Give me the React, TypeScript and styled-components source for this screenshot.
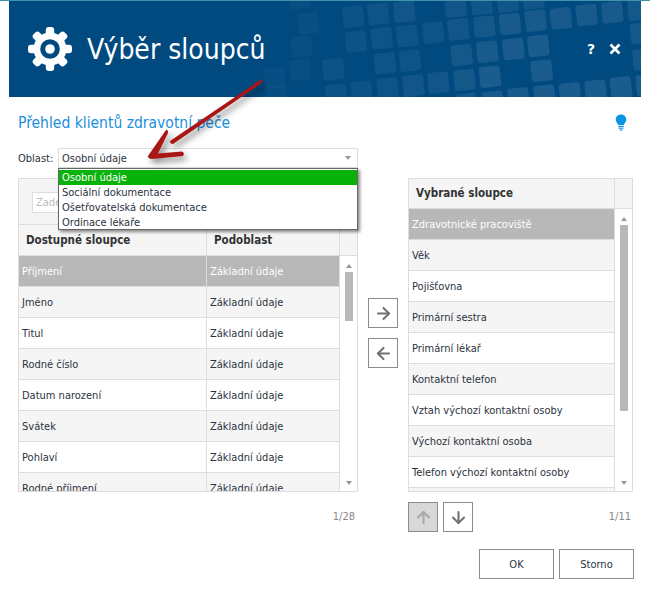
import React from "react";
import styled, { createGlobalStyle } from "styled-components";
import { ArrowRight, ArrowLeft, ArrowUp, ArrowDown } from "lucide-react";

const Global = createGlobalStyle`
  html, body { margin: 0; padding: 0; background: #fff; overflow: hidden; }
  * { box-sizing: border-box; }
`;
const Page = styled.div`
  width: 650px; height: 593px; position: relative; overflow: hidden;
  border-top: 1px solid #3f93ad;
  font-family: "DejaVu Sans Condensed", "DejaVu Sans", sans-serif;
  font-size: 11px; color: #2b3340;
`;
const Header = styled.header`
  position: relative; margin-left: 9px; width: 632px; height: 96px;
  background: #004a80; display: flex; align-items: center; padding: 0 20px 0 18px; overflow: hidden; color: #fff;
`;
const Pattern = styled.svg`position: absolute; left: 0; top: 0;`;
const Title = styled.h1`
  position: relative; margin: 0 0 0 14px; font-size: 28px; font-weight: 400; flex: 1; letter-spacing: 0;
`;
const HeaderAction = styled.span`
  position: relative; font-size: 14px; font-weight: 700; margin-left: 14px; display: flex; align-items: center; font-family: "DejaVu Sans", sans-serif;
`;
const Content = styled.main`padding: 0 16px 0 18px;`;
const SubRow = styled.div`display: flex; justify-content: space-between; align-items: center; height: 51px; padding-right: 7px;`;
const Sub = styled.h2`margin: 0; font-size: 15.5px; font-weight: 400; color: #1b8fdc;`;
const AreaRow = styled.div`display: flex; align-items: center; height: 20px; font-size: 11px;`;
const AreaLabel = styled.label`width: 40px;`;
const SelectBox = styled.div`
  position: relative; width: 300px; height: 20px; border: 1px solid #ddd; background: #fff; padding-left: 3px;
  display: flex; align-items: center; justify-content: space-between; padding-right: 3px;
`;
const Caret = styled.span<{ $up?: boolean }>`
  width: 0; height: 0; border-left: 3.5px solid transparent; border-right: 3.5px solid transparent;
  border-top: ${(p) => (p.$up ? "0" : "4px solid #999")};
  border-bottom: ${(p) => (p.$up ? "4px solid #999" : "0")};
  margin: 0 3px;
`;
const Menu = styled.ul`
  position: absolute; left: -1px; top: 19px; width: 300px; height: 62px; margin: 0; padding: 1px 0 0 0; list-style: none; z-index: 3;
  background: #fff; border: 1px solid #666; box-shadow: 2px 2px 3px rgba(0,0,0,.45);
`;
const MenuItem = styled.li<{ $active?: boolean }>`
  height: 15px; line-height: 15px; padding-left: 3px;
  background: ${(p) => (p.$active ? "#08b208" : "transparent")};
  color: ${(p) => (p.$active ? "#fff" : "inherit")};
`;
const Lists = styled.div`display: flex; margin-top: 10px; align-items: flex-start;`;
const Panel = styled.section<{ $w: number }>`
  width: ${(p) => p.$w}px; height: 314px; border: 1px solid #ddd; background: #f5f5f5; display: flex; flex-direction: column; overflow: hidden;
`;
const Toolbar = styled.div`height: 46px; padding: 13px 0 0 13px; border-bottom: 1px solid #ddd;`;
const Filter = styled.input`
  width: 160px; height: 21px; border: 1px solid #ddd; background: #fff; padding: 0 3px; font: inherit; display: block;
  &::placeholder { color: #bbb; }
`;
const Grid = styled.div`flex: 1; display: flex; min-height: 0;`;
const Table = styled.div`flex: 1; display: flex; flex-direction: column; min-width: 0; overflow: hidden;`;
const HeadRow = styled.div<{ $h: number }>`display: flex; height: ${(p) => p.$h}px; border-bottom: 1px solid #ddd; flex: none;`;
const HeadCell = styled.div<{ $w?: number }>`
  ${(p) => (p.$w ? `width:${p.$w}px; flex:none; border-right:1px solid #ddd;` : "flex:1;")}
  padding: 0 0 1px 7px; font-weight: 700; display: flex; align-items: center; font-size: 11.5px; color: #333;
`;
const Row = styled.div<{ $sel?: boolean; $alt?: boolean }>`
  display: flex; height: 31px; flex: none; border-bottom: 1px solid #ddd;
  background: ${(p) => (p.$sel ? "#b8b8b8" : p.$alt ? "#f5f5f5" : "#fff")};
  color: ${(p) => (p.$sel ? "#fff" : "inherit")};
`;
const Cell = styled.div<{ $w?: number }>`
  ${(p) => (p.$w ? `width:${p.$w}px; flex:none; border-right:1px solid #ddd;` : "flex:1;")}
  padding-left: 3px; display: flex; align-items: center; white-space: nowrap;
`;
const ScrollHead = styled.div`width: 18px; border-left: 1px solid #ddd; flex: none;`;
const ScrollCol = styled.div`width: 18px; flex: none; display: flex; flex-direction: column;`;
const Track = styled.div`
  flex: 1; background: #fff; border-left: 1px solid #ddd; display: flex; flex-direction: column; align-items: center; padding: 8px 0 6px;
`;
const Thumb = styled.div<{ $h: number }>`width: 8px; height: ${(p) => p.$h}px; background: #b8b8b8; margin-top: 4px; margin-bottom: auto;`;
const Middle = styled.div`width: 30px; margin: 120px 10px 0; display: flex; flex-direction: column; gap: 10px;`;
const IconBtn = styled.button<{ $off?: boolean }>`
  width: 30px; height: 30px; padding: 0; border: 1px solid #8c8c8c; display: flex; align-items: center; justify-content: center;
  background: ${(p) => (p.$off ? "#d8d8d8" : "#fff")}; color: ${(p) => (p.$off ? "#a8a8a8" : "#707070")};
`;
const Under = styled.div`display: flex; height: 40px; margin-top: 10px; align-items: flex-start;`;
const LeftCount = styled.div`width: 340px; text-align: right; padding: 8px 3px 0 0; color: #888; height: 30px;`;
const RightUnder = styled.div`margin-left: 50px; width: 225px; display: flex; gap: 5px;`;
const Count = styled.span`margin-left: auto; padding: 8px 2px 0 0; color: #888;`;
const Footer = styled.div`display: flex; justify-content: flex-end; gap: 5px; margin-top: 7px;`;
const Btn = styled.button`
  width: 75px; height: 30px; background: #fff; border: 1px solid #8c8c8c; font: inherit; color: inherit; padding: 0;
`;
const Overlay = styled.svg`position: absolute; left: 0; top: -1px; z-index: 5; pointer-events: none;`;

const squares: [number, number, number][] = [
  [85,50,.05],[160,42,.06],[238,35,.07],[392,20,.07],[470,12,.07],[548,5,.07],[625,-5,.07],
  [708,55,.09],[785,45,.09],[862,37,.09],[632,62,.09],[555,72,.09],[478,80,.08],[400,88,.07],[325,98,.06],[247,108,.06],[170,115,.06],[93,125,.05],
  [640,138,.1],[565,147,.1],[487,155,.09],[410,165,.08],[255,182,.06],[180,190,.06],[25,208,.05],
  [650,212,.1],[495,230,.1],[418,240,.08],[340,248,.07],[265,257,.07],[188,265,.06],[110,275,.05],[33,285,.05],
  [948,100,.08],[955,178,.08],[735,280,.1],[812,272,.1],[888,262,.1],[965,255,.1],[658,287,.1],[580,295,.09],[503,305,.09],[425,312,.08],[940,30,.08],
  [-75,-5,.03],[-50,70,.03],[-70,140,.03],[-75,210,.03],[-150,235,.025],[-145,290,.025],
];

const Gear = () => (
  <svg width="46" height="46" viewBox="-23 -23 46 46" style={{ position: "relative", flex: "none" }}>
    {[0, 45, 90, 135].map((a) => (
      <rect key={a} x="-4.2" y="-22" width="8.4" height="44" rx="3" fill="#fff" transform={`rotate(${a})`} />
    ))}
    <circle r="16.5" fill="#fff" />
    <circle r="9.8" fill="#004a80" />
    <circle r="4.8" fill="#fff" />
  </svg>
);

const Bulb = () => (
  <svg width="12" height="17" viewBox="0 0 12 17">
    <path d="M6 0.5C2.9 0.5 .7 2.7 .7 5.4c0 2.7 2 3.6 2.6 5.6h5.4c.6-2 2.6-2.9 2.6-5.6C11.3 2.7 9.1.5 6 .5z" fill="#0a95e2" />
    <rect x="3.2" y="11.8" width="5.6" height="1.1" fill="#0a95e2" />
    <rect x="3.5" y="13.6" width="5" height="1.1" fill="#0a95e2" />
    <rect x="4.5" y="15.4" width="3" height="1.1" fill="#0a95e2" />
  </svg>
);

const Cross = () => (
  <svg width="12" height="12" viewBox="0 0 12 12">
    <path d="M1.5 1.5L10.5 10.5M10.5 1.5L1.5 10.5" stroke="#fff" strokeWidth="2.6" />
  </svg>
);

const Scroll = ({ h }: { h: number }) => (
  <ScrollCol>
    <Track>
      <Caret $up />
      <Thumb $h={h} />
      <Caret />
    </Track>
  </ScrollCol>
);

const left = ["Příjmení", "Jméno", "Titul", "Rodné číslo", "Datum narození", "Svátek", "Pohlaví", "Rodné příjmení"];
const right = [
  "Zdravotnické pracoviště", "Věk", "Pojišťovna", "Primární sestra", "Primární lékař", "Kontaktní telefon",
  "Vztah výchozí kontaktní osoby", "Výchozí kontaktní osoba", "Telefon výchozí kontaktní osoby", "",
];
const areas = ["Osobní údaje", "Sociální dokumentace", "Ošetřovatelská dokumentace", "Ordinace lékaře"];

export default function App() {
  return (
    <Page>
      <Global />
      <Header>
        <Pattern width="632" height="96" viewBox="0 0 632 96">
          {squares.map(([x, y, o], i) => (
            <rect
              key={i}
              x={x / 3 + 316 - 10.5}
              y={y / 3 - 1 - 10.5}
              width="21"
              height="21"
              rx="3"
              fill="#fff"
              opacity={o}
              transform={`rotate(-6 ${x / 3 + 316} ${y / 3 - 1})`}
            />
          ))}
        </Pattern>
        <Gear />
        <Title>Výběr sloupců</Title>
        <HeaderAction>?</HeaderAction>
        <HeaderAction><Cross /></HeaderAction>
      </Header>
      <Content>
        <SubRow>
          <Sub>Přehled klientů zdravotní péče</Sub>
          <Bulb />
        </SubRow>
        <AreaRow>
          <AreaLabel>Oblast:</AreaLabel>
          <SelectBox>
            Osobní údaje
            <Caret />
            <Menu>
              {areas.map((a, i) => (
                <MenuItem key={a} $active={i === 0}>{a}</MenuItem>
              ))}
            </Menu>
          </SelectBox>
        </AreaRow>
        <Lists>
          <Panel $w={340}>
            <Toolbar><Filter placeholder="Zadejte text" /></Toolbar>
            <Grid>
              <Table>
                <HeadRow $h={31}>
                  <HeadCell $w={188}>Dostupné sloupce</HeadCell>
                  <HeadCell>Podoblast</HeadCell>
                  <ScrollHead />
                </HeadRow>
                <Grid>
                  <Table>
                    {left.map((t, i) => (
                      <Row key={t} $sel={i === 0} $alt={i % 2 === 1}>
                        <Cell $w={188}>{t}</Cell>
                        <Cell>Základní údaje</Cell>
                      </Row>
                    ))}
                  </Table>
                  <Scroll h={49} />
                </Grid>
              </Table>
            </Grid>
          </Panel>
          <Middle>
            <IconBtn aria-label="Přidat"><ArrowRight size={19} strokeWidth={2.6} /></IconBtn>
            <IconBtn aria-label="Odebrat"><ArrowLeft size={19} strokeWidth={2.6} /></IconBtn>
          </Middle>
          <Panel $w={225}>
            <Table>
              <HeadRow $h={30}>
                <HeadCell>Vybrané sloupce</HeadCell>
                <ScrollHead />
              </HeadRow>
              <Grid>
                <Table>
                  {right.map((t, i) => (
                    <Row key={i} $sel={i === 0} $alt={i % 2 === 1}>
                      <Cell>{t}</Cell>
                    </Row>
                  ))}
                </Table>
                <Scroll h={186} />
              </Grid>
            </Table>
          </Panel>
        </Lists>
        <Under>
          <LeftCount>1/28</LeftCount>
          <RightUnder>
            <IconBtn $off aria-label="Nahoru"><ArrowUp size={19} strokeWidth={2.6} /></IconBtn>
            <IconBtn aria-label="Dolů"><ArrowDown size={19} strokeWidth={2.6} /></IconBtn>
            <Count>1/11</Count>
          </RightUnder>
        </Under>
        <Footer>
          <Btn>OK</Btn>
          <Btn>Storno</Btn>
        </Footer>
      </Content>
      <Overlay width="650" height="593" viewBox="0 0 650 593">
        <defs>
          <filter id="sh" x="-20%" y="-20%" width="150%" height="150%">
            <feDropShadow dx="3" dy="4" stdDeviation="3" floodColor="#000" floodOpacity=".45" />
          </filter>
        </defs>
        <g filter="url(#sh)" fill="#a81616">
          <path d="M261 79.5 Q263 81 261 83.5 L173 144 Q170 144 170 141 Z" />
          <path d="M166 130 L148 156 Q148 159 152 159 L183 156 Q185 153 182 151.5 L158 153.5 L168 133 Q168 129 166 130 Z" />
        </g>
      </Overlay>
    </Page>
  );
}
